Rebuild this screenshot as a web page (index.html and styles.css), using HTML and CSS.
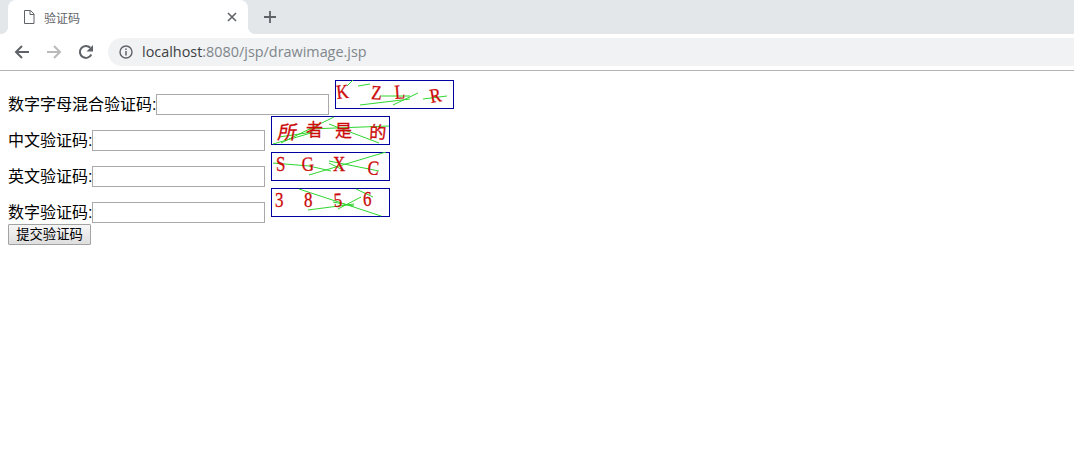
FILE: index.html
```html
<!DOCTYPE html>
<html lang="zh">
<head>
  <meta charset="UTF-8">
  <title>验证码</title>
  <link rel="stylesheet" href="styles.css">
</head>
<body>
  <div class="tabbar">
    <div class="tab">
      <svg class="tab-icon" width="12" height="14" viewBox="0 0 12 14"><path d="M1.500 .5h6l3.500 3.500v9.500h-9.500zM7 .5v4h4" fill="none" stroke="#5f6368" stroke-width="1"/></svg>
      <span class="tab-title">验证码</span>
      <svg class="tab-close" width="10" height="10" viewBox="0 0 10 10"><path d="M1 1l8 8M9 1l-8 8" stroke="#5f6368" stroke-width="1.600"/></svg>
    </div>
    <svg class="new-tab" width="12" height="12" viewBox="0 0 12 12"><path d="M6 0v12M0 6h12" stroke="#5f6368" stroke-width="1.800"/></svg>
  </div>
  <div class="toolbar">
    <svg class="nav-btn" width="16" height="16" viewBox="0 0 16 16"><path d="M15 8H2M8 2L2 8l6 6" fill="none" stroke="#5f6368" stroke-width="2"/></svg>
    <svg class="nav-btn" width="16" height="16" viewBox="0 0 16 16"><path d="M1 8h13M8 2l6 6-6 6" fill="none" stroke="#bababa" stroke-width="2"/></svg>
    <svg class="nav-btn" width="16" height="16" viewBox="0 0 16 16"><path d="M13.300 10.500A6 6 0 1 1 12.300 3.800" fill="none" stroke="#5f6368" stroke-width="2"/><path d="M15 1v6.500H8.500z" fill="#5f6368"/></svg>
    <div class="omnibox">
      <svg width="14" height="14" viewBox="0 0 14 14"><circle cx="7" cy="7" r="6" fill="none" stroke="#5f6368" stroke-width="1.400"/><path d="M7 6v4.500M7 3.400v1.500" stroke="#5f6368" stroke-width="1.500"/></svg>
      <span class="url"><span class="url-host">localhost</span>:8080/jsp/drawimage.jsp</span>
    </div>
  </div>

  <form class="content">
    <span class="label">数字字母混合验证码:</span><input type="text">
    <svg class="captcha" width="119" height="29" viewBox="0 0 119 29">
      <rect x=".5" y=".5" width="118" height="28" class="frame"/>
      <path class="noise" d="M12 6L18 0M23 6L35 4M45 16L75 16M25 25L75 19M58 25L83 13M88 19L112 16"/>
      <text transform="translate(2 19) rotate(-6) scale(.85 1)">K</text>
      <text transform="translate(36 19) rotate(3) scale(.85 1)">Z</text>
      <text transform="translate(60 19) rotate(-4) scale(.85 1)">L</text>
      <text transform="translate(96 23) rotate(-10) scale(.85 1)">R</text>
    </svg><br>
    <span class="label">中文验证码:</span><input type="text">
    <svg class="captcha" width="119" height="29" viewBox="0 0 119 29">
      <rect x=".5" y=".5" width="118" height="28" class="frame"/>
      <path class="noise" d="M10 27L63 1M8 21L42 16M38 13L118 10M58 8L108 27M2 28L40 17"/>
      <text class="cn" transform="translate(6 23) skewX(-10)">所</text>
      <text class="cn small" transform="translate(35 20)">者</text>
      <text class="cn small" transform="translate(64 21)">是</text>
      <text class="cn small" transform="translate(98 22) rotate(3)">的</text>
    </svg><br>
    <span class="label">英文验证码:</span><input type="text">
    <svg class="captcha" width="119" height="29" viewBox="0 0 119 29">
      <rect x=".5" y=".5" width="118" height="28" class="frame"/>
      <path class="noise" d="M2 11L38 14M38 23L115 0M58 9L108 19M58 11L72 18M38 14L60 19"/>
      <text transform="translate(5 19) scale(.85 1)">S</text>
      <text transform="translate(31 19) rotate(-3) scale(.85 1)">G</text>
      <text transform="translate(62 19) scale(.85 1)">X</text>
      <text transform="translate(96 22) rotate(6) scale(.85 1)">C</text>
    </svg><br>
    <span class="label">数字验证码:</span><input type="text">
    <svg class="captcha" width="119" height="29" viewBox="0 0 119 29">
      <rect x=".5" y=".5" width="118" height="28" class="frame"/>
      <path class="noise" d="M28 1L110 28M37 22L83 16M67 21L90 9M85 1L102 9M62 14L83 18"/>
      <text transform="translate(4 19) scale(.85 1)">3</text>
      <text transform="translate(33 19) scale(.85 1)">8</text>
      <text transform="translate(63 19) rotate(-3) scale(.85 1)">5</text>
      <text transform="translate(92 18) scale(.85 1)">6</text>
    </svg><br>
    <button type="button">提交验证码</button>
  </form>
</body>
</html>
```

FILE: styles.css
```css
body {
  margin: 0;
  background: #fff;
  font-family: "Liberation Sans", "Noto Sans CJK SC", sans-serif;
  font-size: 16px;
  color: #000;
}

.tabbar {
  display: flex;
  align-items: center;
  height: 34px;
  padding-left: 8px;
  background: #e4e7ea;
}

.tab {
  position: relative;
  display: flex;
  align-items: center;
  box-sizing: border-box;
  align-self: flex-end;
  width: 240px;
  height: 34px;
  padding: 0 11px 0 15px;
  background: #fff;
  border-radius: 8px 8px 0 0;
}

.tab::before,
.tab::after {
  content: "";
  position: absolute;
  bottom: 0;
  width: 8px;
  height: 8px;
}

.tab::before {
  left: -8px;
  background: radial-gradient(circle at 0 0, #e4e7ea 8px, #fff 8.500px);
}

.tab::after {
  right: -8px;
  background: radial-gradient(circle at 100% 0, #e4e7ea 8px, #fff 8.500px);
}

.tab-title {
  flex: 1;
  margin-left: 9px;
  font-size: 12px;
  color: #5f6368;
}

.new-tab {
  margin-left: 16px;
}

.toolbar {
  display: flex;
  align-items: center;
  box-sizing: border-box;
  height: 37px;
  padding: 0 0 1px 14px;
  gap: 16px;
  background: #fff;
  border-bottom: 1px solid #b3b3b3;
}

.omnibox {
  flex: 1;
  display: flex;
  align-items: center;
  gap: 9px;
  height: 28px;
  margin-left: -2px;
  padding-left: 11px;
  background: #f0f2f4;
  border-radius: 14px 0 0 14px;
}

.url {
  font-family: "Open Sans", sans-serif;
  font-size: 14.4px;
  color: #80868b;
}

.url-host {
  color: #3c4043;
}

.content {
  padding: 9px 8px 8px;
  line-height: 22px;
}

.label {
  vertical-align: -1px;
}

input {
  box-sizing: border-box;
  width: 173px;
  height: 21px;
  padding: 1px 2px;
  border: 1px solid #a9a9a9;
  background: #fff;
}

button {
  display: block;
  box-sizing: border-box;
  width: 83px;
  height: 21px;
  padding: 0;
  font-family: inherit;
  font-size: 13.333px;
  line-height: 19px;
  color: #000;
  background: linear-gradient(#f6f6f6, #dedede);
  border: 1px solid #a3a3a3;
  border-radius: 1px;
}

.captcha {
  margin-left: 1px;
}

.frame {
  fill: #fff;
  stroke: #0000a0;
}

.noise {
  fill: none;
  stroke: #2fd62f;
  stroke-width: 1;
}

.captcha text {
  font-family: "Liberation Serif", serif;
  font-size: 20px;
  fill: #cc0a0a;
  stroke: #cc0a0a;
  stroke-width: .3px;
}

.captcha text.cn {
  font-family: "Noto Sans CJK SC", sans-serif;
  font-size: 19px;
}

.captcha text.small {
  font-size: 17px;
}
```
